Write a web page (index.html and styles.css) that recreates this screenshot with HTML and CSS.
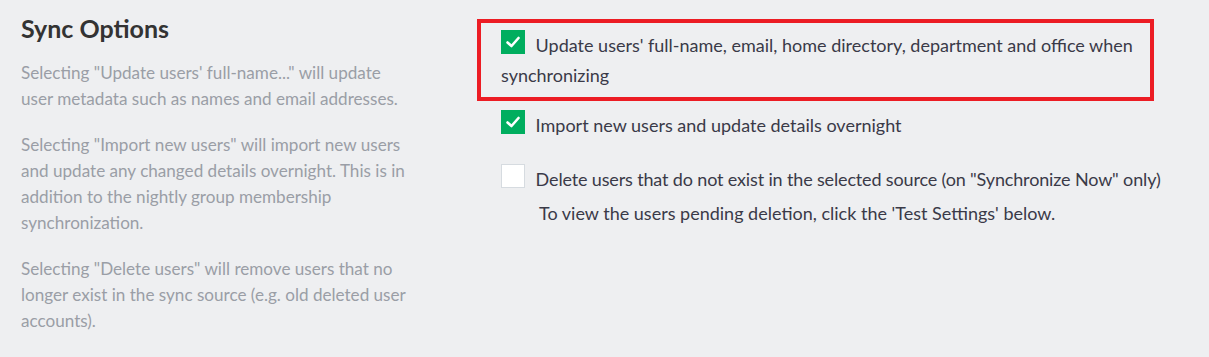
FILE: index.html
```html
<!DOCTYPE html>
<html lang="en">
<head>
  <meta charset="UTF-8">
  <title>Sync Options</title>
  <link rel="stylesheet" href="styles.css">
</head>
<body>
  <div class="settings">
    <div class="info">
      <h2>Sync Options</h2>
      <p>Selecting "Update users' full-name..." will update user metadata such as names and email addresses.</p>
      <p>Selecting "Import new users" will import new users and update any changed details overnight. This is in addition to the nightly group membership synchronization.</p>
      <p>Selecting "Delete users" will remove users that no longer exist in the sync source (e.g. old deleted user accounts).</p>
    </div>

    <div class="options">
      <div class="option highlight">
        <span class="check on"><svg viewBox="0 0 24 24" width="24" height="24"><polyline points="6.5,12.5 10.5,16 17.5,8" fill="none" stroke="#fff" stroke-width="2.6" stroke-linecap="round" stroke-linejoin="round"/></svg></span>
        <span class="label">Update users' full-name, email, home directory, department and office when synchronizing</span>
      </div>
      <div class="option">
        <span class="check on"><svg viewBox="0 0 24 24" width="24" height="24"><polyline points="6.5,12.5 10.5,16 17.5,8" fill="none" stroke="#fff" stroke-width="2.6" stroke-linecap="round" stroke-linejoin="round"/></svg></span>
        <span class="label">Import new users and update details overnight</span>
      </div>
      <div class="option delete">
        <span class="check"></span>
        <span class="label narrow">Delete users that do not exist in the selected source (on "Synchronize Now" only)</span>
        <div class="hint">To view the users pending deletion, click the 'Test Settings' below.</div>
      </div>
    </div>
  </div>
</body>
</html>
```

FILE: styles.css
```css
body {
  margin: 0;
  background-color: #eeeff1;
  font-family: Lato, "Open Sans", sans-serif;
}

.settings {
  display: flex;
  padding: 12px 0 0 21px;
}

.info {
  width: 390px;
  flex-shrink: 0;
}

.info h2 {
  margin: 0 0 16px;
  font-size: 25px;
  font-weight: 700;
  line-height: 32px;
  color: #333;
}

.info p {
  margin: 0 0 20px;
  font-size: 17.1px;
  line-height: 26px;
  color: #9a9ea6;
}

.options {
  margin-left: 66px;
  padding-top: 7px;
  width: 720px;
}

.option {
  padding: 0 0 0 24px;
  font-size: 18px;
  line-height: 30px;
  color: #3a3a48;
}

.option.highlight {
  width: 649px;
  padding: 7px 0 7px 20px;
  border: 4px solid #ec1c24;
}

.check {
  display: inline-block;
  width: 24px;
  height: 24px;
  margin-right: 6px;
  vertical-align: top;
  background-color: #fff;
  border: 1px solid #d6dbe0;
  box-sizing: border-box;
}

.check.on {
  background-color: #00ae5f;
  border: none;
}

.check svg {
  display: block;
}

.option + .option {
  margin-top: 9px;
}

.option.delete {
  margin-top: 24px;
}

.narrow {
  letter-spacing: -0.15px;
}

.hint {
  padding-left: 38px;
  margin-top: 4px;
}
```
